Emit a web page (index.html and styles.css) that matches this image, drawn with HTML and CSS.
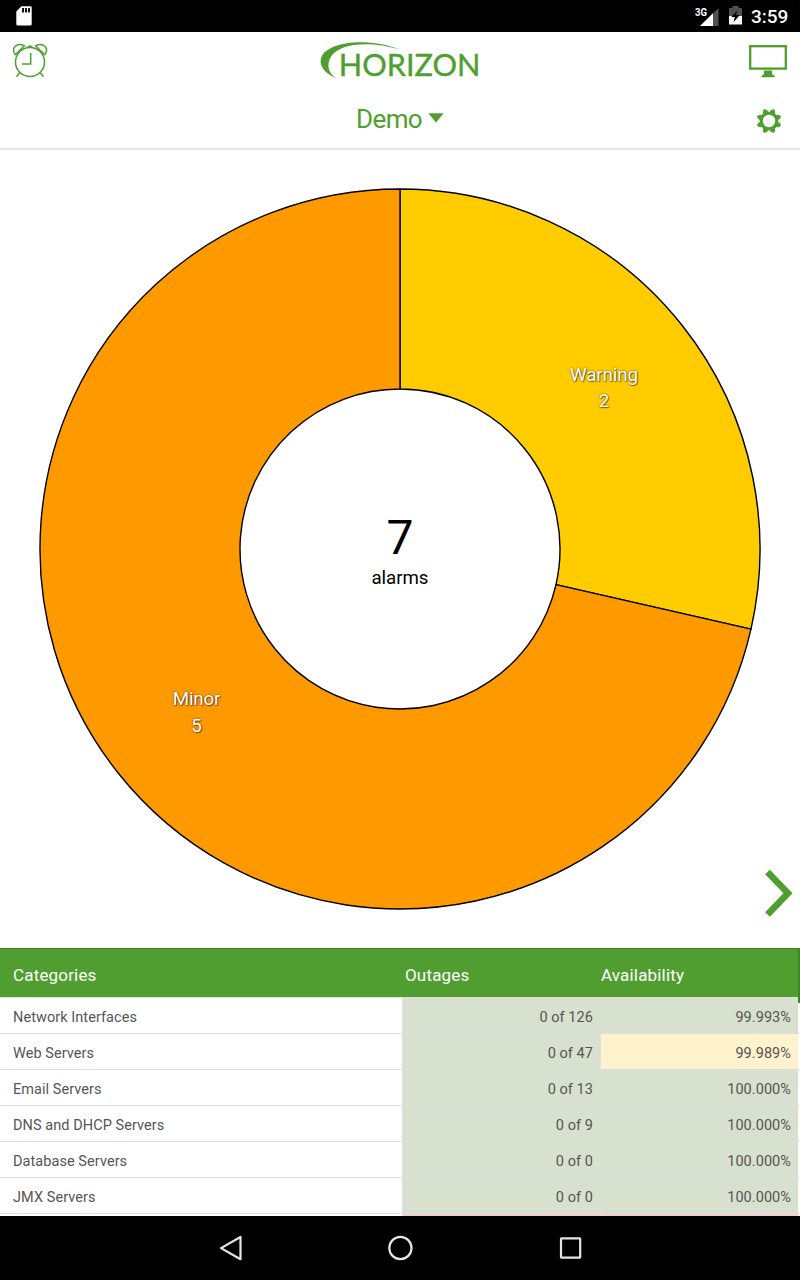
FILE: index.html
```html
<!DOCTYPE html>
<html lang="en">
<head>
<meta charset="utf-8">
<title>Horizon</title>
<link rel="stylesheet" href="styles.css">
</head>
<body>
<div class="screen">
  <div class="status">
    <svg class="sd" width="16" height="20" viewBox="0 0 16 20"><path d="M5.5 0.3H14.3Q15.7 0.3 15.7 1.7V18Q15.7 19.5 14.3 19.5H1.7Q.3 19.5 .3 18V5.5Z" fill="#fff"/><path d="M6 2h2v4.5H6zM9 2h2v4.5H9zM12 2h2v4.5h-2z" fill="#111"/></svg>
    <div class="status-right">
      <svg width="24" height="20" viewBox="0 0 24 20"><path d="M23.5 1V19H5Z" fill="#505050"/><path d="M18 6.2V19H5Z" fill="#fff"/><text x="0" y="9" class="net" textLength="12" lengthAdjust="spacingAndGlyphs">3G</text></svg>
      <svg class="battery" width="13" height="19" viewBox="0 0 13 19"><path d="M0 2H3.5V0H9.5V2H13V10H0Z" fill="#505050"/><path d="M0 10H13V18.5H0Z" fill="#fff"/><path d="M8.3 4.5 2.2 11H5.8L4.5 16.2 10.8 9H7Z" fill="#000"/></svg>
      <span class="clock">3:59</span>
    </div>
  </div>
  <header class="top">
    <svg class="alarm" width="36" height="36" viewBox="0 0 36 36"><g fill="none" stroke="#4f9f30" stroke-width="1.5"><circle cx="18" cy="20" r="14.5"/><path d="M3.2 12.7C-1.5 6 5 0 12.5 3.8ZM32.8 12.7C37.5 6 31 0 23.5 3.8Z M7.8 30.5 4.5 34.7M28.2 30.5 31.5 34.7M16 4.8Q18 3.1 20 4.8"/><path d="M18.7 11V22H10"/></g></svg>
    <svg class="logo" width="170" height="48" viewBox="-1 0 170 48"><path d="M17 39C7 35-1 27 2.5 18C8 4 46-3 82 11C49 1 21 5 12.5 17C7 25 9 34 17 39Z" fill="#4f9f30"/><text x="19.8" y="37.4" textLength="141.7" lengthAdjust="spacingAndGlyphs" class="logo-text">HORIZON</text></svg>
    <svg class="monitor" width="38" height="33" viewBox="0 0 38 33"><rect x="1.2" y="1.2" width="35.6" height="22.4" fill="none" stroke="#4f9f30" stroke-width="2.3"/><path d="M15 25.5h8v3.5l2.7 2v1.2H12.5V31L15 29Z" fill="#4f9f30"/></svg>
  </header>
  <div class="picker">
    <div class="picker-label"><span>Demo</span><svg width="16" height="10" viewBox="0 0 16 10"><path d="M.3.3H15.7L8 9.6Z" fill="#4f9f30"/></svg></div>
    <svg class="gear" width="26" height="26" viewBox="-13 -13 26 26"><g stroke="#4f9f30" stroke-width="5" stroke-linejoin="round"><path d="M-4.2 -10.2 4.2 10.2M4.2 -10.2-4.2 10.2M-10.2 -4.2 10.2 4.2M-10.2 4.2 10.2-4.2" stroke-linecap="butt"/><path d="M-4.2 -10.2 4.2 10.2M4.2 -10.2-4.2 10.2M-10.2 -4.2 10.2 4.2M-10.2 4.2 10.2-4.2" stroke-width="3.2" stroke-linecap="round"/></g><circle r="9.4" fill="#4f9f30"/><circle r="6.2" fill="#fff"/></svg>
  </div>
  <main class="chart">
    <svg width="800" height="798" viewBox="0 150 800 798">
      <g stroke="#000" stroke-width="1.4" stroke-linejoin="round">
        <path d="M400 189A360 360 0 0 1 750.97 629.11L555.99 584.6A160 160 0 0 0 400 389Z" fill="#fc0"/>
        <path d="M750.97 629.11A360 360 0 1 1 400 189V389A160 160 0 1 0 555.99 584.6Z" fill="#f90"/>
      </g>
      <g text-anchor="middle">
        <text x="400" y="554" class="count">7</text>
        <text x="400" y="584" class="unit" textLength="57">alarms</text>
        <g class="slice"><text x="604" y="381" textLength="68">Warning</text><text x="604" y="407">2</text><text x="196.5" y="705" textLength="47.5">Minor</text><text x="196.5" y="732">5</text></g>
      </g>
      <path d="M767.5 872 788 893.3 767.5 914.5" fill="none" stroke="#4f9f30" stroke-width="6.6"/>
    </svg>
  </main>
  <section class="table">
    <div class="row head"><span>Categories</span><span>Outages</span><span>Availability</span></div>
    <div class="row"><span>Network Interfaces</span><span>0 of 126</span><span>99.993%</span></div>
    <div class="row"><span>Web Servers</span><span>0 of 47</span><span class="warn">99.989%</span></div>
    <div class="row"><span>Email Servers</span><span>0 of 13</span><span>100.000%</span></div>
    <div class="row"><span>DNS and DHCP Servers</span><span>0 of 9</span><span>100.000%</span></div>
    <div class="row"><span>Database Servers</span><span>0 of 0</span><span>100.000%</span></div>
    <div class="row"><span>JMX Servers</span><span>0 of 0</span><span>100.000%</span></div>
    <div class="row next"><span></span><span></span><span></span></div>
    <i class="scrollbar"></i>
  </section>
  <nav class="nav">
    <svg width="24" height="26" viewBox="0 0 24 26"><path d="M21.5 2V24.2L2 13.1Z"/></svg>
    <svg width="26" height="26" viewBox="0 0 26 26"><circle cx="12.4" cy="13" r="11.1"/></svg>
    <svg width="24" height="26" viewBox="0 0 24 26"><rect x="2" y="3.4" width="19.2" height="19.2" rx=".5"/></svg>
  </nav>
</div>
</body>
</html>
```
FILE: styles.css
```css
body { margin: 0; background: #fff; font-family: Roboto, sans-serif; }
svg { display: block; flex: none; }
.screen { width: 800px; height: 1280px; overflow: hidden; display: flex; flex-direction: column; }
.status { height: 32px; box-sizing: border-box; background: #000; color: #fff; display: flex; justify-content: space-between; align-items: center; padding: 0 11px 0 16px; }
.status-right { display: flex; align-items: center; }
.status-right svg:first-child { margin-top: 1px; }
.net { font: bold 11px Roboto, sans-serif; fill: #fff; }
.battery { margin: -1px 9px 0 10px; }
.clock { font-size: 19px; font-weight: 500; line-height: 33px; width: 38px; white-space: nowrap; }
.top { height: 56px; display: grid; grid-template-columns: 1fr 164px 1fr; align-items: start; }
.alarm { margin: 10px 0 0 12px; }
.logo { margin-top: 7px; overflow: visible; }
.logo-text { font: 31px Lato, sans-serif; fill: #4f9f30; stroke: #4f9f30; stroke-width: .4; }
.monitor { justify-self: end; margin: 13px 13px 0 0; }
.picker { height: 60px; border-bottom: 2px solid #e6e6e6; display: grid; grid-template-columns: 1fr auto 1fr; }
.picker-label { grid-column: 2; display: flex; gap: 7px; color: #4f9f30; font-size: 26px; line-height: 30px; padding-top: 16px; }
.picker-label span { display: block; width: 65px; letter-spacing: -.6px; white-space: nowrap; }
.picker-label svg { margin-top: 9px; }
.gear { justify-self: end; margin: 20px 18px 0 0; }
.chart { height: 798px; flex: none; }
.count { font-size: 48px; font-weight: 400; }
.unit { font-size: 18.7px; }
.slice { font-size: 18.7px; fill: #fff; text-shadow: 1px 1px 1px rgba(0,0,0,.4), 0 0 2px rgba(0,0,0,.7); }
.table { position: relative; height: 268px; flex: none; overflow: hidden; }
.row { height: 36px; box-sizing: border-box; display: grid; grid-template-columns: 402px 198px 198px; color: #555; font-size: 14.5px; line-height: 39px; letter-spacing: .06px; border-top: 1px solid #ddd; }
.row span { height: 35px; padding: 0 7px 0 13px; }
.row span + span { background: #d8e1cf; text-align: right; border-left: 1px solid #dde3d7; }
.row span + .warn { background: #fff3cd; }
.row.head { height: 49px; background: #4f9e2f; border-top: 1px solid #3f8026; color: #fff; font-size: 17px; line-height: 52px; letter-spacing: .17px; }
.row.head span + span { background: none; border: 0; text-align: left; padding-left: 3px; }
.row.head span + span + span { padding-left: 1px; }
.row.next span + span { background: #f5cfcf; }
.scrollbar { position: absolute; right: 0; top: 0; width: 2px; height: 55px; background: #3f8426; }
.nav { height: 64px; flex: none; background: #000; display: flex; justify-content: center; align-items: center; gap: 145px; padding: 0 0 0 2px; box-sizing: border-box; }
.nav svg { fill: none; stroke: #e6e6e6; stroke-width: 2.2; stroke-linejoin: round; }
```
